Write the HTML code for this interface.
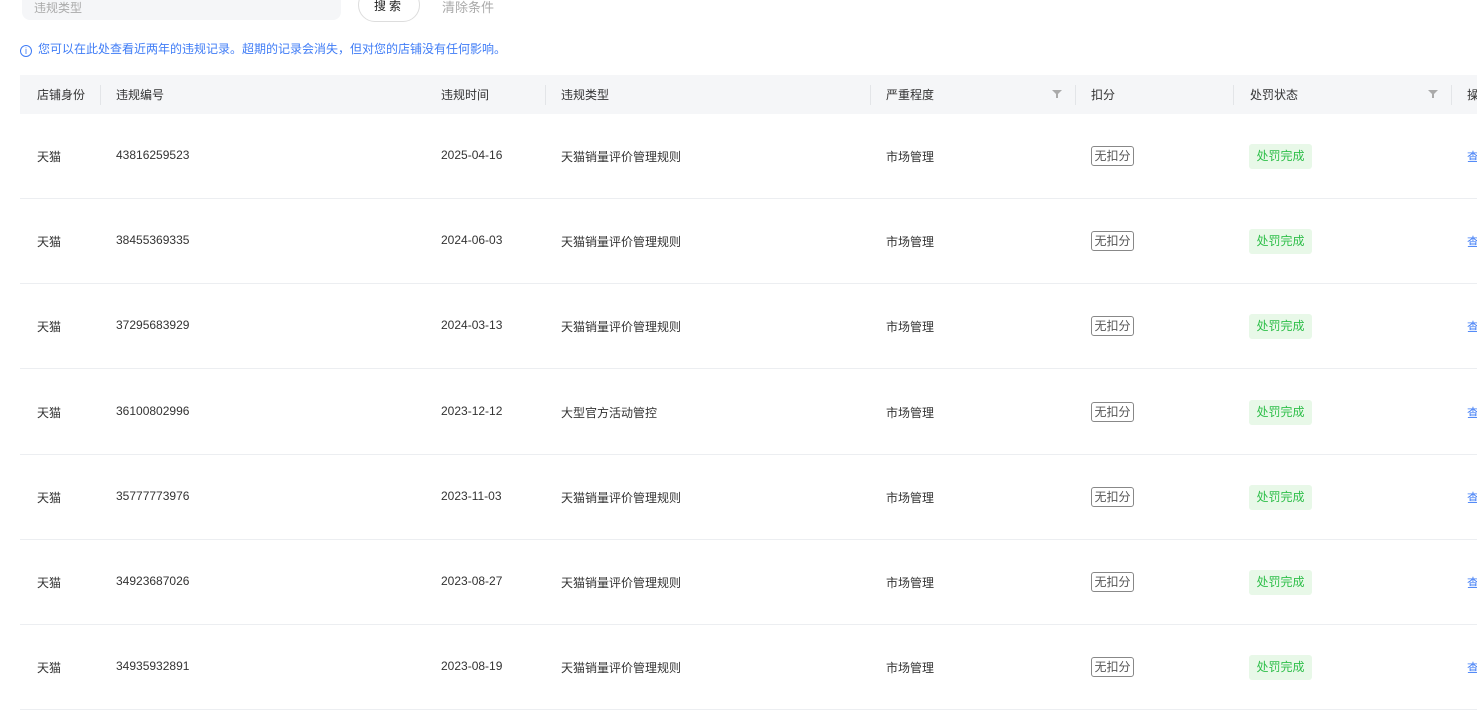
<!DOCTYPE html>
<html><head><meta charset="utf-8"><style>
*{margin:0;padding:0;box-sizing:border-box}
body{width:1477px;height:710px;overflow:hidden;background:#fff;font-family:"Liberation Sans","Noto Sans CJK SC",sans-serif;font-size:12px;color:#333;position:relative}
.a{position:absolute;white-space:nowrap}
.inp{left:22px;top:-12px;width:319px;height:32px;background:#f5f6f8;border-radius:8px;color:#aaa;padding:0 12px;font-size:12px}
.btn{left:358px;top:-12px;width:62px;height:34px;border:1px solid #ddd;border-radius:17px;text-align:center;padding-top:8px;color:#222;letter-spacing:3px}
.hdr{left:20px;top:75px;width:1457px;height:39px;background:#f5f6f8}
.sep{position:absolute;top:10px;width:1px;height:20px;background:#e3e5e8}
.ht{top:11px;position:absolute;color:#333}
.row{position:absolute;left:20px;width:1457px;height:85px;border-bottom:1px solid #eceef1}
.c{position:absolute;top:34px;color:#333}
.tag1{position:absolute;left:1071px;top:32px;width:43px;height:20px;border:1px solid #888;border-radius:3px;text-align:center;line-height:18px;color:#555}
.tag2{position:absolute;left:1229px;top:30px;width:63px;height:25px;background:#e8f8e8;border-radius:3px;text-align:center;line-height:25px;color:#2fbf4a}
.filt{position:absolute;top:15px}
</style></head><body>
<div class="a inp"><div style="margin-top:11px">违规类型</div></div>
<div class="a btn">搜索</div>
<div class="a" style="left:442px;top:-3px;font-size:13px;color:#aaa">清除条件</div>
<div class="a" style="left:20px;top:40px;color:#3f7cf6;font-size:12px"><span style="display:inline-block;width:12px;height:12px;border:1px solid #3f7cf6;border-radius:50%;font-size:9px;text-align:center;line-height:10px;vertical-align:-1px;margin-right:6px">i</span>您可以在此处查看近两年的违规记录。超期的记录会消失，但对您的店铺没有任何影响。</div>
<div class="a hdr">
<div class="ht" style="left:17px">店铺身份</div><div class="sep" style="left:80px"></div>
<div class="ht" style="left:96px">违规编号</div>
<div class="ht" style="left:421px">违规时间</div><div class="sep" style="left:525px"></div>
<div class="ht" style="left:541px">违规类型</div><div class="sep" style="left:850px"></div>
<div class="ht" style="left:866px">严重程度</div><svg class="filt" style="left:1032px" width="10" height="10" viewBox="0 0 10 10"><path d="M0 0H10L6 4V8H4V4Z" fill="#aaa"/></svg><div class="sep" style="left:1055px"></div>
<div class="ht" style="left:1071px">扣分</div><div class="sep" style="left:1213px"></div>
<div class="ht" style="left:1230px">处罚状态</div><svg class="filt" style="left:1408px" width="10" height="10" viewBox="0 0 10 10"><path d="M0 0H10L6 4V8H4V4Z" fill="#aaa"/></svg><div class="sep" style="left:1431px"></div>
<div class="ht" style="left:1447px">操</div>
</div>
<div id="rows"></div>
<script>
var d=[["43816259523","2025-04-16","天猫销量评价管理规则"],["38455369335","2024-06-03","天猫销量评价管理规则"],["37295683929","2024-03-13","天猫销量评价管理规则"],["36100802996","2023-12-12","大型官方活动管控"],["35777773976","2023-11-03","天猫销量评价管理规则"],["34923687026","2023-08-27","天猫销量评价管理规则"],["34935932891","2023-08-19","天猫销量评价管理规则"]];
var h="";d.forEach(function(r,i){h+='<div class="row" style="top:'+(114+i*85.2)+'px"><div class="c" style="left:17px">天猫</div><div class="c" style="left:96px">'+r[0]+'</div><div class="c" style="left:421px">'+r[1]+'</div><div class="c" style="left:541px">'+r[2]+'</div><div class="c" style="left:866px">市场管理</div><div class="tag1">无扣分</div><div class="tag2">处罚完成</div><div class="c" style="left:1447px;color:#3f7cf6">查</div></div>'});
document.getElementById("rows").innerHTML=h;
</script>
</body></html>
